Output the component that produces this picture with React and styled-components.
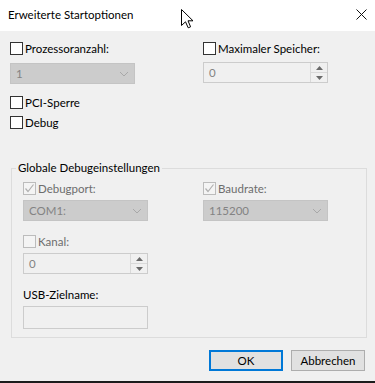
import React from "react";
import styled, { createGlobalStyle, css } from "styled-components";

const GlobalStyle = createGlobalStyle`
  html, body {
    margin: 0;
    padding: 0;
    background: #1c1c1c;
  }
  body {
    font-family: "Segoe UI", Lato, "Noto Sans", sans-serif;
    font-size: 11.5px;
    color: #000;
  }
`;

const Dialog = styled.div`
  position: relative;
  width: 375px;
  height: 381px;
  background: #f0f0f0;
  display: flex;
  flex-direction: column;
  overflow: hidden;
`;

const TitleBar = styled.div`
  height: 31px;
  background: #fff;
  display: flex;
  align-items: center;
  justify-content: space-between;
  padding: 0 8px 2px 8px;
  box-sizing: border-box;
`;

const Title = styled.span`
  font-size: 11.5px;
  color: #000;
`;

const Body = styled.div`
  flex: 1;
  padding: 11px 10px 0 10px;
  display: flex;
  flex-direction: column;
`;

const Columns = styled.div`
  display: grid;
  grid-template-columns: ${(p) => p.left}px 125px;
  align-items: start;
`;

const Col = styled.div`
  display: flex;
  flex-direction: column;
  align-items: flex-start;
`;

const CheckRow = styled.label`
  display: flex;
  align-items: center;
  gap: 2px;
  height: 13px;
  margin-top: ${(p) => p.mt || 0}px;
  color: ${(p) => (p.disabled ? "#6d6d6d" : "#000")};
  line-height: 13px;
  white-space: nowrap;
`;

const Box = styled.span`
  width: 13px;
  height: 13px;
  box-sizing: border-box;
  border: 1px solid ${(p) => (p.disabled ? "#bcbcbc" : "#333")};
  background: ${(p) => (p.disabled ? "#f4f4f4" : "#fff")};
  display: flex;
  align-items: center;
  justify-content: center;
  flex-shrink: 0;
`;

const fieldBase = css`
  width: 125px;
  box-sizing: border-box;
  margin-top: ${(p) => p.mt || 0}px;
  display: flex;
  align-items: center;
  color: #838383;
`;

const Combo = styled.div`
  ${fieldBase};
  height: 21px;
  background: #cccccc;
  border: 1px solid #c4c4c4;
  padding-left: 5px;
  justify-content: space-between;
`;

const Spin = styled.div`
  ${fieldBase};
  height: 21px;
  background: #f0f0f0;
  border: 1px solid #cccccc;
  padding-left: 5px;
  justify-content: space-between;
  align-items: stretch;
`;

const SpinButtons = styled.div`
  width: 16px;
  display: flex;
  flex-direction: column;
  border-left: 1px solid #d9d9d9;
`;

const SpinHalf = styled.div`
  flex: 1;
  display: flex;
  align-items: center;
  justify-content: center;
  border-top: ${(p) => (p.lower ? "1px solid #d9d9d9" : "none")};
`;

const FieldText = styled.span`
  align-self: center;
`;

const GroupBox = styled.fieldset`
  margin: 31px 0 0 1px;
  padding: 0;
  width: 356px;
  box-sizing: border-box;
  border: 1px solid #dcdcdc;
  min-width: 0;
`;

const Legend = styled.legend`
  margin-left: 4px;
  padding: 0 2px;
  line-height: 16px;
  color: #000;
`;

const GroupInner = styled.div`
  padding: 6px 0 8px 11px;
  display: flex;
  flex-direction: column;
  align-items: flex-start;
`;

const FieldLabel = styled.div`
  margin-top: 13px;
  line-height: 16px;
  color: #000;
`;

const TextInput = styled.div`
  width: 125px;
  height: 23px;
  margin-top: 3px;
  box-sizing: border-box;
  background: #f0f0f0;
  border: 1px solid #cccccc;
`;

const ButtonRow = styled.div`
  display: flex;
  justify-content: flex-end;
  gap: 8px;
  margin-top: 12px;
`;

const Button = styled.button`
  width: 74px;
  height: 21px;
  box-sizing: border-box;
  font: inherit;
  color: #000;
  background: #e1e1e1;
  border: ${(p) => (p.primary ? "2px solid #0078d7" : "1px solid #adadad")};
  padding: 0;
  line-height: 1;
`;

const Cursor = styled.svg`
  position: absolute;
  left: 181px;
  top: 9px;
`;

const Chevron = () => (
  <svg width="10" height="6" viewBox="0 0 10 6" style={{ marginRight: 5 }}>
    <path d="M1 1 L5 5 L9 1" fill="none" stroke="#a8a8a8" strokeWidth="1" />
  </svg>
);

const Check = () => (
  <svg width="11" height="11" viewBox="0 0 11 11">
    <path d="M1.5 5.5 L4 8.5 L9.5 1.5" fill="none" stroke="#b0b0b0" strokeWidth="1.2" />
  </svg>
);

const Arrow = ({ down }) => (
  <svg width="7" height="4" viewBox="0 0 7 4">
    <path d={down ? "M0 0 L7 0 L3.5 4 Z" : "M0 4 L7 4 L3.5 0 Z"} fill="#6a6a6a" />
  </svg>
);

const Checkbox = ({ label, checked, disabled, mt }) => (
  <CheckRow mt={mt} disabled={disabled}>
    <Box disabled={disabled}>{checked && <Check />}</Box>
    <span>{label}</span>
  </CheckRow>
);

const ComboBox = ({ value, mt }) => (
  <Combo mt={mt}>
    <span>{value}</span>
    <Chevron />
  </Combo>
);

const SpinBox = ({ value, mt }) => (
  <Spin mt={mt}>
    <FieldText>{value}</FieldText>
    <SpinButtons>
      <SpinHalf>
        <Arrow />
      </SpinHalf>
      <SpinHalf lower>
        <Arrow down />
      </SpinHalf>
    </SpinButtons>
  </Spin>
);

export default function App() {
  return (
    <>
      <GlobalStyle />
      <Dialog>
        <TitleBar>
          <Title>Erweiterte Startoptionen</Title>
          <svg width="11" height="11" viewBox="0 0 11 11">
            <path d="M0.5 0.5 L10.5 10.5 M10.5 0.5 L0.5 10.5" stroke="#111" strokeWidth="1" />
          </svg>
        </TitleBar>
        <Body>
          <Columns left={193}>
            <Col>
              <Checkbox label="Prozessoranzahl:" />
              <ComboBox value="1" mt={8} />
              <Checkbox label="PCI-Sperre" mt={12} />
              <Checkbox label="Debug" mt={7} />
            </Col>
            <Col>
              <Checkbox label="Maximaler Speicher:" />
              <SpinBox value="0" mt={7} />
            </Col>
          </Columns>

          <GroupBox>
            <Legend>Globale Debugeinstellungen</Legend>
            <GroupInner>
              <Columns left={180}>
                <Col>
                  <Checkbox label="Debugport:" checked disabled />
                  <ComboBox value="COM1:" mt={5} />
                  <Checkbox label="Kanal:" disabled mt={14} />
                  <SpinBox value="0" mt={5} />
                </Col>
                <Col>
                  <Checkbox label="Baudrate:" checked disabled />
                  <ComboBox value="115200" mt={5} />
                </Col>
              </Columns>
              <FieldLabel>USB-Zielname:</FieldLabel>
              <TextInput />
            </GroupInner>
          </GroupBox>

          <ButtonRow>
            <Button primary>OK</Button>
            <Button>Abbrechen</Button>
          </ButtonRow>
        </Body>
        <Cursor width="13" height="20" viewBox="0 0 13 20">
          <path
            d="M0.5 0.5 L0.5 16.5 L4.5 12.8 L7.2 18.8 L9.6 17.8 L7 11.8 L12 11.8 Z"
            fill="#fff"
            stroke="#000"
            strokeWidth="1"
            strokeLinejoin="round"
          />
        </Cursor>
      </Dialog>
    </>
  );
}
